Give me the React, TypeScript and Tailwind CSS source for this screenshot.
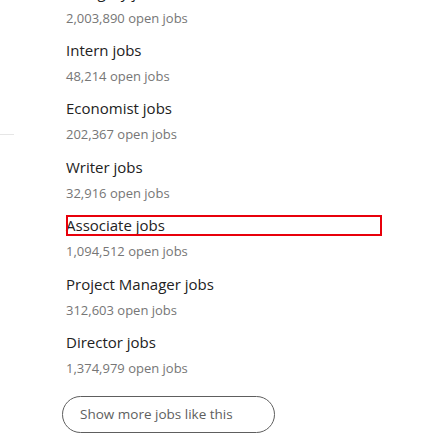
import * as React from "react";

interface JobTitle {
    name: string;
    count: string;
    focused?: boolean;
}

const jobs: JobTitle[] = [
    { name: "Category jobs", count: "2,003,890" },
    { name: "Intern jobs", count: "48,214" },
    { name: "Economist jobs", count: "202,367" },
    { name: "Writer jobs", count: "32,916" },
    { name: "Associate jobs", count: "1,094,512", focused: true },
    { name: "Project Manager jobs", count: "312,603" },
    { name: "Director jobs", count: "1,374,979" },
];

export default function App() {
    return (
        <div
            className="w-[448px] h-[448px] overflow-hidden bg-white flex"
            style={{ fontFamily: '"Open Sans", "Noto Sans", sans-serif' }}
        >
            {/* left gutter with a stray divider */}
            <div className="w-[66px] shrink-0">
                <div className="mt-[134px] w-[14px] h-px bg-[#e6e6e6]" />
            </div>

            <div className="w-[316px] -mt-[18.4px]">
                <ul className="flex flex-col gap-[12.4px]">
                    {jobs.map((job) => (
                        <li key={job.name}>
                            <a
                                href="#"
                                className={
                                    job.focused
                                        ? "block text-[15px] leading-[21px] font-medium text-[#222222] outline-2 outline-[#e8000b] -outline-offset-2"
                                        : "block text-[15px] leading-[21px] font-medium text-[#222222]"
                                }
                            >
                                {job.name}
                            </a>
                            <p className="mt-[5px] text-[13px] leading-[20px] text-[#767676]">
                                {job.count} open jobs
                            </p>
                        </li>
                    ))}
                </ul>

                <button className="mt-[18px] -ml-[4px] w-[213px] h-[37px] rounded-full border border-[#5e5e5e] text-left pl-[17px] text-[13.5px] font-medium text-[#5e5e5e]">
                    Show more jobs like this
                </button>
            </div>
        </div>
    );
}
